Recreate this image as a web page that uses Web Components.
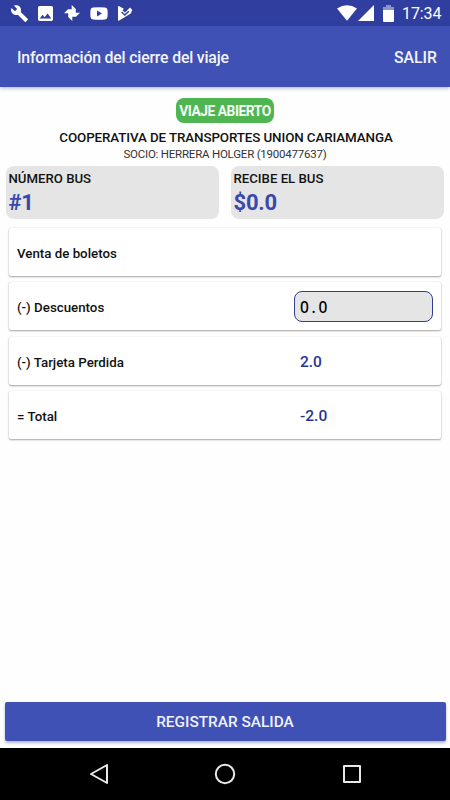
<!DOCTYPE html>
<html lang="es">
<head>
<meta charset="utf-8">
<title>Información del cierre del viaje</title>
<style>
    html, body {
        margin: 0;
        height: 100%;
    }
    body {
        font-family: Roboto, "Liberation Sans", sans-serif;
        background: #fefefe;
        color: #121212;
        overflow: hidden;
    }
</style>
</head>
<body>
<trip-screen></trip-screen>

<script>
function createTemplate (html) {
    const template = document.createElement('template');
    template.innerHTML = html;
    return template;
}

class BaseElement extends HTMLElement {

    constructor () {
        super();
        this._shadowRoot = this.attachShadow({ mode: 'open' });
        this._shadowRoot.appendChild(this.constructor.template.content.cloneNode(true));
    }

}

class StatusBar extends BaseElement {}
StatusBar.template = createTemplate(`
    <style>
        :host {
            display: flex;
            align-items: center;
            height: 26px;
            box-sizing: border-box;
            padding: 0 9px 0 11px;
            background: #303f9f;
            color: #fff;
        }
        svg {
            display: block;
            flex: none;
            fill: #fff;
        }
        .notifications, .system {
            display: flex;
            align-items: center;
        }
        .system {
            margin-left: auto;
        }
        .time {
            width: 39px;
            margin-left: 8px;
            padding-top: 2px;
            font-size: 16px;
            line-height: 24px;
            letter-spacing: -0.1px;
            white-space: nowrap;
        }
    </style>

    <div class="notifications">
        <svg width="17" height="17" viewBox="0.9 1 22.2 22"><path d="M22.7 19l-9.1-9.1c.9-2.3.4-5-1.5-6.9-2-2-5-2.4-7.4-1.3L9 6 6 9 1.6 4.7C.4 7.1.9 10.1 2.9 12.1c1.9 1.9 4.6 2.4 6.9 1.5l9.1 9.1c.4.4 1 .4 1.4 0l2.3-2.3c.5-.4.5-1.1.1-1.4z"/></svg>
        <svg style="margin-left: 10px" width="15" height="15" viewBox="3 3 18 18"><path d="M21 19V5c0-1.1-.9-2-2-2H5c-1.1 0-2 .9-2 2v14c0 1.1.9 2 2 2h14c1.1 0 2-.9 2-2zM8.5 13.5l2.5 3L14.5 12l4.5 6H5l3.5-4.5z"/></svg>
        <svg style="margin-left: 11px" width="16" height="16" viewBox="0 0 16 16"><path d="M7.700 8V0L11.800 4V7.700H8zM8 7.700H16L12 11.800H8.300V8zM8.300 8V16L4.200 12V8.300H8zM8 8.300H0L4 4.200H7.700V8z"/></svg>
        <svg style="margin-left: 9.5px" width="18" height="13" viewBox="0 0 18 13"><path fill-rule="evenodd" d="M3 .6Q9 0 15 .6Q17.3 .8 17.5 3Q17.8 6.5 17.5 10Q17.3 12.2 15 12.4Q9 13 3 12.4Q.7 12.2 .5 10Q.2 6.5 .5 3Q.7 .8 3 .6zM7 3.600V9.400L12 6.500z"/></svg>
        <svg style="margin-left: 10.5px" width="15" height="15" viewBox="0 0 15 15"><path d="M.8 0L5.800 2.800L4.600 4.400L7 6.400L12 1.600L14.300 4L12.800 7.600L.8 14.800Q0 14.800 0 14V.8Q0 0 .8 0z"/><path d="M3.600 6L6.800 9L10.800 5.200" fill="none" stroke="#303f9f" stroke-width="1.400"/></svg>
    </div>
    <div class="system">
        <svg width="20" height="16" viewBox="0 0 20 16"><path d="M0 3.5Q10-3 20 3.5L10 15.8z"/></svg>
        <svg style="margin-left: 1px" width="16" height="16" viewBox="0 0 16 16"><path d="M16 0V16H0z"/></svg>
        <svg style="margin-left: 9px" width="11" height="17" viewBox="0 0 11 17"><path d="M3 0H8V2H11V5H0V2H3z" fill="#8c94c9"/><path d="M0 5H11V16Q11 17 10 17H1Q0 17 0 16z"/></svg>
        <span class="time">17:34</span>
    </div>
`);
customElements.define('status-bar', StatusBar);

class AppBar extends BaseElement {}
AppBar.template = createTemplate(`
    <style>
        :host {
            display: flex;
            align-items: center;
            justify-content: space-between;
            height: 61px;
            box-sizing: border-box;
            padding: 2px 13px 0 17px;
            background: #3f51b5;
            color: #f3f4fb;
            font-size: 15.8px;
            font-weight: 500;
            box-shadow: 0 1px 4px rgba(40, 50, 120, .4);
            white-space: nowrap;
        }
        .title {
            letter-spacing: -0.17px;
        }
    </style>

    <span class="title"><slot></slot></span>
    <span><slot name="action"></slot></span>
`);
customElements.define('app-bar', AppBar);

class StatusBadge extends BaseElement {}
StatusBadge.template = createTemplate(`
    <style>
        :host {
            display: block;
            width: 98px;
            height: 25px;
            border-radius: 8px;
            background: #4fb551;
            color: #f4fbf4;
            font-size: 13.8px;
            font-weight: 700;
            line-height: 26px;
            letter-spacing: -0.45px;
            text-align: center;
            white-space: nowrap;
        }
    </style>

    <slot></slot>
`);
customElements.define('status-badge', StatusBadge);

class InfoBox extends BaseElement {}
InfoBox.template = createTemplate(`
    <style>
        :host {
            display: block;
            height: 53px;
            box-sizing: border-box;
            padding: 4px 2.5px 0;
            border-radius: 8px;
            background: #e5e5e5;
            white-space: nowrap;
        }
        .label {
            font-size: 13.2px;
            font-weight: 500;
            line-height: 18px;
        }
        .value {
            padding-top: 1px;
            color: #3949ab;
            font-size: 22px;
            font-weight: 700;
            line-height: 28px;
            letter-spacing: -0.2px;
        }
    </style>

    <div class="label"><slot name="label"></slot></div>
    <div class="value"><slot></slot></div>
`);
customElements.define('info-box', InfoBox);

class AmountCard extends BaseElement {}
AmountCard.template = createTemplate(`
    <style>
        :host {
            display: grid;
            grid-template-columns: 277px 1fr;
            align-items: center;
            height: 48px;
            box-sizing: border-box;
            padding: 0 8px;
            border-radius: 2px;
            background: #fff;
            box-shadow: 0 1px 2px rgba(0, 0, 0, .35), 0 0 1px rgba(0, 0, 0, .2);
            white-space: nowrap;
        }
        .label {
            padding-top: 3px;
            font-size: 13.3px;
            font-weight: 500;
        }
        ::slotted(.amount) {
            padding: 2px 0 0 6px;
            color: #283593;
            font-size: 15.5px;
            font-weight: 500;
        }
    </style>

    <span class="label"><slot name="label"></slot></span>
    <slot></slot>
`);
customElements.define('amount-card', AmountCard);

class AmountField extends BaseElement {}
AmountField.template = createTemplate(`
    <style>
        :host {
            display: block;
            width: 139px;
            height: 31px;
            box-sizing: border-box;
            padding-left: 5px;
            border: 1px solid #303f8f;
            border-radius: 8px;
            background: #e5e5e5;
            color: #000;
            font-family: "Noto Sans", sans-serif;
            font-size: 15.5px;
            font-weight: 500;
            line-height: 30px;
            letter-spacing: 2.7px;
        }
    </style>

    <slot></slot>
`);
customElements.define('amount-field', AmountField);

class PrimaryButton extends BaseElement {}
PrimaryButton.template = createTemplate(`
    <style>
        :host {
            display: block;
        }
        button {
            display: block;
            width: 100%;
            height: 39px;
            padding: 0;
            border: 0;
            border-radius: 2px;
            background: #3f51b5;
            color: #f0f2fb;
            font: 500 15.4px Roboto, "Liberation Sans", sans-serif;
            box-shadow: 0 2px 3px rgba(40, 50, 110, .35);
        }
    </style>

    <button type="button"><slot></slot></button>
`);
customElements.define('primary-button', PrimaryButton);

class NavBar extends BaseElement {}
NavBar.template = createTemplate(`
    <style>
        :host {
            display: grid;
            grid-template-columns: repeat(3, 126.5px);
            justify-content: center;
            justify-items: center;
            align-items: center;
            height: 52px;
            background: #000;
        }
        svg {
            display: block;
            fill: none;
            stroke: #e8e8e8;
            stroke-width: 2;
            stroke-linejoin: round;
        }
    </style>

    <svg width="20" height="22" viewBox="0 0 20 22"><path d="M18 2V20L2 11z"/></svg>
    <svg width="22" height="22" viewBox="0 0 22 22"><circle cx="11" cy="11" r="9.2"/></svg>
    <svg width="20" height="20" viewBox="0 0 20 20"><path d="M2 2H18V18H2z"/></svg>
`);
customElements.define('nav-bar', NavBar);

class TripScreen extends BaseElement {}
TripScreen.template = createTemplate(`
    <style>
        :host {
            display: flex;
            flex-direction: column;
            width: 450px;
            height: 800px;
        }
        main {
            flex: 1;
            display: flex;
            flex-direction: column;
            padding-top: 11px;
        }
        status-badge {
            margin: 0 auto;
        }
        .company, .partner {
            text-align: center;
            white-space: nowrap;
        }
        .company {
            margin-top: 6px;
            padding-left: 2px;
            font-size: 13.4px;
            font-weight: 500;
            line-height: 18px;
            letter-spacing: -0.12px;
        }
        .partner {
            font-size: 11.5px;
            line-height: 14px;
            letter-spacing: -0.22px;
            color: #333;
        }
        .summary {
            display: grid;
            grid-template-columns: 1fr 1fr;
            gap: 12px;
            margin: 5px 6px 0;
        }
        .amounts {
            display: grid;
            gap: 6.3px;
            margin: 9px 9px 0;
        }
        primary-button {
            margin: auto 4.5px 7px;
        }
    </style>

    <status-bar></status-bar>
    <app-bar>Información del cierre del viaje<span slot="action">SALIR</span></app-bar>
    <main>
        <status-badge>VIAJE ABIERTO</status-badge>
        <div class="company">COOPERATIVA DE TRANSPORTES UNION CARIAMANGA</div>
        <div class="partner">SOCIO: HERRERA HOLGER (1900477637)</div>
        <div class="summary">
            <info-box><span slot="label">NÚMERO BUS</span>#1</info-box>
            <info-box><span slot="label">RECIBE EL BUS</span>$0.0</info-box>
        </div>
        <div class="amounts">
            <amount-card><span slot="label">Venta de boletos</span></amount-card>
            <amount-card><span slot="label">(-) Descuentos</span><amount-field>0.0</amount-field></amount-card>
            <amount-card><span slot="label">(-) Tarjeta Perdida</span><span class="amount">2.0</span></amount-card>
            <amount-card><span slot="label">= Total</span><span class="amount">-2.0</span></amount-card>
        </div>
        <primary-button>REGISTRAR SALIDA</primary-button>
    </main>
    <nav-bar></nav-bar>
`);
customElements.define('trip-screen', TripScreen);
</script>
</body>
</html>
